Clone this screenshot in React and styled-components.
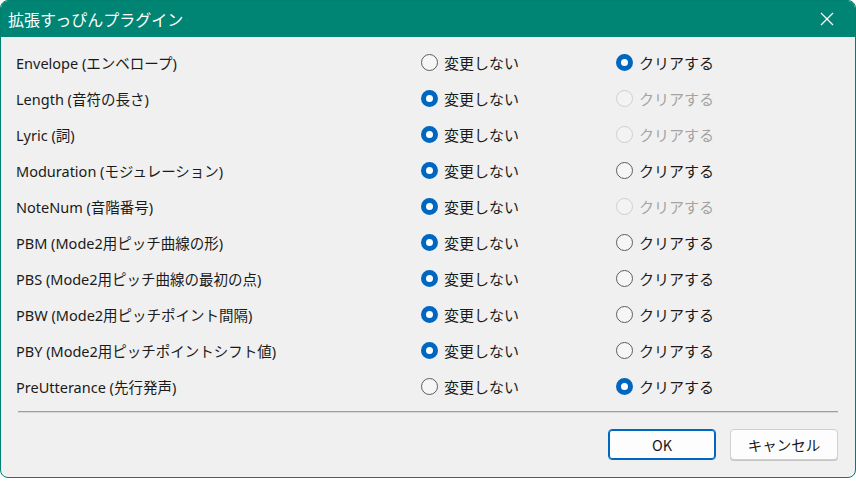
import React from "react";
import styled, { createGlobalStyle } from "styled-components";

const GlobalStyle = createGlobalStyle`
  html, body {
    margin: 0;
    padding: 0;
    background: #ffffff;
  }
  body {
    font-family: "Noto Sans", "Noto Sans CJK JP", sans-serif;
  }
`;

const rows = [
  { label: "Envelope (エンベロープ)", value: "clear", clearDisabled: false },
  { label: "Length (音符の長さ)", value: "keep", clearDisabled: true },
  { label: "Lyric (詞)", value: "keep", clearDisabled: true },
  { label: "Moduration (モジュレーション)", value: "keep", clearDisabled: false },
  { label: "NoteNum (音階番号)", value: "keep", clearDisabled: true },
  { label: "PBM (Mode2用ピッチ曲線の形)", value: "keep", clearDisabled: false },
  { label: "PBS (Mode2用ピッチ曲線の最初の点)", value: "keep", clearDisabled: false },
  { label: "PBW (Mode2用ピッチポイント間隔)", value: "keep", clearDisabled: false },
  { label: "PBY (Mode2用ピッチポイントシフト値)", value: "keep", clearDisabled: false },
  { label: "PreUtterance (先行発声)", value: "clear", clearDisabled: false },
];

const Radio = ({ checked, disabled, children }) => (
  <SOption $disabled={disabled}>
    <SCircle $checked={checked} $disabled={disabled} />
    <span>{children}</span>
  </SOption>
);

export default function App() {
  return (
    <>
      <GlobalStyle />
      <SWindow>
        <STitleBar>
          <STitle>拡張すっぴんプラグイン</STitle>
          <SClose>
            <svg width="16" height="16" viewBox="0 0 16 16">
              <path d="M2 2 L14 14 M14 2 L2 14" stroke="#fff" strokeWidth="1.3" fill="none" />
            </svg>
          </SClose>
        </STitleBar>
        <SBody>
          <SGrid>
            {rows.map((r) => (
              <React.Fragment key={r.label}>
                <SLabel>{r.label}</SLabel>
                <Radio checked={r.value === "keep"}>変更しない</Radio>
                <Radio checked={r.value === "clear"} disabled={r.clearDisabled}>
                  クリアする
                </Radio>
              </React.Fragment>
            ))}
          </SGrid>
          <SSeparator />
          <SButtons>
            <SButton $primary>OK</SButton>
            <SButton>キャンセル</SButton>
          </SButtons>
        </SBody>
      </SWindow>
    </>
  );
}

const SWindow = styled.div`
  width: 856px;
  height: 478px;
  box-sizing: border-box;
  border: 1px solid #00806f;
  border-radius: 8px;
  overflow: hidden;
  background: #f0f0f0;
  display: flex;
  flex-direction: column;
`;

const STitleBar = styled.div`
  height: 36px;
  background: #008575;
  display: flex;
  align-items: center;
  justify-content: space-between;
  padding: 0 0 0 7px;
  flex-shrink: 0;
`;

const STitle = styled.div`
  color: #ffffff;
  font-size: 16px;
  font-family: "Noto Sans CJK JP", sans-serif;
`;

const SClose = styled.div`
  width: 46px;
  height: 36px;
  display: flex;
  align-items: center;
  justify-content: center;
  margin-right: 5px;
`;

const SBody = styled.div`
  flex: 1;
  padding: 7px 17px 0 15px;
  display: flex;
  flex-direction: column;
`;

const SGrid = styled.div`
  display: grid;
  grid-template-columns: 405px 195px 1fr;
  grid-auto-rows: 36px;
  align-items: center;
`;

const SLabel = styled.div`
  font-size: 14.5px;
  color: #1a1a1a;
  white-space: nowrap;
  font-family: "Noto Sans", "Noto Sans CJK JP", sans-serif;
`;

const SOption = styled.div`
  display: flex;
  align-items: center;
  gap: 6px;
  font-size: 15px;
  font-family: "Noto Sans CJK JP", sans-serif;
  color: ${(p) => (p.$disabled ? "#a3a3a3" : "#1a1a1a")};
  white-space: nowrap;
`;

const SCircle = styled.span`
  width: 17px;
  height: 17px;
  box-sizing: border-box;
  border-radius: 50%;
  flex-shrink: 0;
  background: ${(p) => (p.$checked ? "#ffffff" : p.$disabled ? "#f3f3f3" : "#f6f6f6")};
  border: ${(p) =>
    p.$checked
      ? "5.5px solid #0067c0"
      : p.$disabled
      ? "1px solid #cfcfcf"
      : "1px solid #5d5d5d"};
`;

const SSeparator = styled.div`
  margin-top: 7px;
  height: 1px;
  background: #a0a0a0;
  border-bottom: 1px solid #d8d8d8;
  margin-left: 2px;
`;

const SButtons = styled.div`
  display: flex;
  justify-content: flex-end;
  gap: 14px;
  margin-top: 16px;
`;

const SButton = styled.button`
  width: 108px;
  height: 31px;
  box-sizing: border-box;
  border-radius: 4px;
  background: #fdfdfd;
  border: 1px solid ${(p) => (p.$primary ? "#0067c0" : "#d0d0d0")};
  box-shadow: ${(p) => (p.$primary ? "inset 0 0 0 1px #0067c0" : "0 1px 0 #c4c4c4")};
  font-size: 14.5px;
  font-family: "Noto Sans CJK JP", sans-serif;
  color: #1a1a1a;
  padding: 0;
`;
